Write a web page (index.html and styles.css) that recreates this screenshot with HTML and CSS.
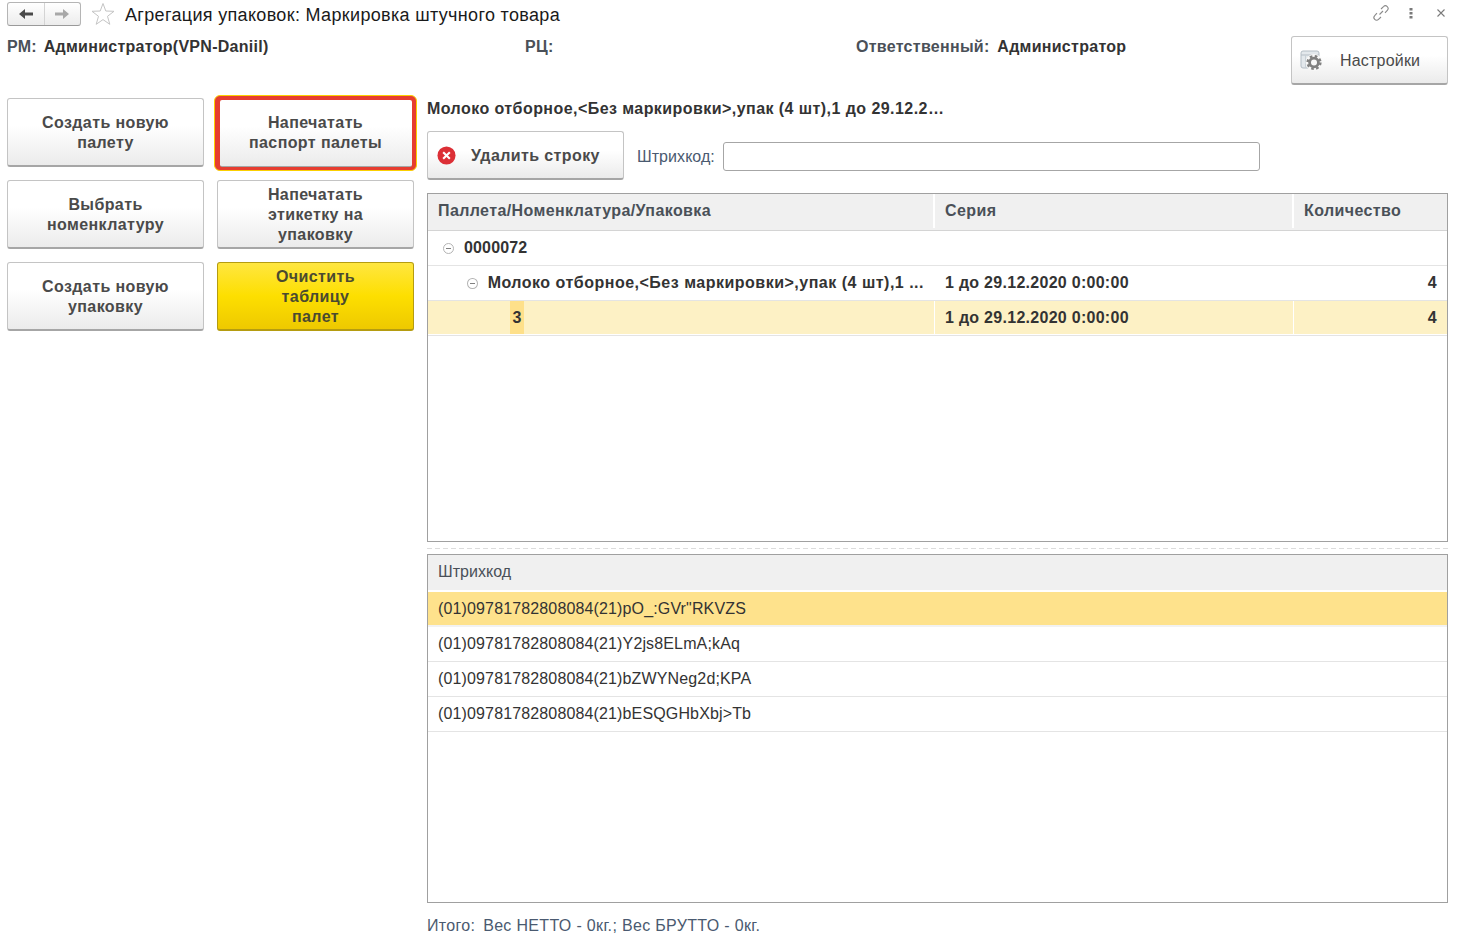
FILE: index.html
```html
<!DOCTYPE html>
<html lang="en">
<head>
  <meta charset="UTF-8">
  <title>Агрегация упаковок</title>
  <link rel="stylesheet" href="styles.css">
</head>
<body>
  <header class="topbar">
    <div class="nav-btns">
      <button class="nav-btn">
        <svg width="16" height="12" viewBox="0 0 16 12"><path d="M1 6 L7 1 V4.5 H15 V7.5 H7 V11 Z" fill="#4a4a4a"/></svg>
      </button>
      <button class="nav-btn">
        <svg width="16" height="12" viewBox="0 0 16 12"><path d="M15 6 L9 1 V4.5 H1 V7.5 H9 V11 Z" fill="#a8a8a8"/></svg>
      </button>
    </div>
    <svg class="star" width="24" height="24" viewBox="0 0 24 24"><path d="M12 1.5 L14.8 9 L23 9.3 L16.5 14.3 L18.8 22.3 L12 17.6 L5.2 22.3 L7.5 14.3 L1 9.3 L9.2 9 Z" fill="none" stroke="#c4c4c4"/></svg>
    <h1 class="title">Агрегация упаковок: Маркировка штучного товара</h1>
    <div class="win-icons">
      <svg class="icon-link" width="18" height="18" viewBox="0 0 18 18" fill="none" stroke="#8a8a8a" stroke-width="1.1"><path d="M7.5 10.5 L11 7"/><path d="M9 5 L11.5 2.6 a2.6 2.6 0 0 1 3.8 3.7 L13 8.8"/><path d="M9 13 L6.5 15.4 a2.6 2.6 0 0 1 -3.8 -3.7 L5 9.2"/></svg>
      <svg class="icon-dots" width="4" height="11" viewBox="0 0 4 11" fill="#7a7a7a"><rect x="0.5" y="0" width="3" height="2.5"/><rect x="0.5" y="4" width="3" height="2.5"/><rect x="0.5" y="8" width="3" height="2.5"/></svg>
      <svg class="icon-close" width="10" height="10" viewBox="0 0 10 10" stroke="#7a7a7a" stroke-width="1.1"><path d="M1.5 1.5 L8.5 8.5 M8.5 1.5 L1.5 8.5"/></svg>
    </div>
  </header>

  <section class="info-row">
    <div class="info info-rm"><span class="info-label">РМ:</span> <b>Администратор(VPN-Daniil)</b></div>
    <div class="info info-rc"><span class="info-label">РЦ:</span></div>
    <div class="info info-owner"><span class="info-label">Ответственный:</span> <b>Администратор</b></div>
    <button class="btn settings-btn">
      <svg width="24" height="22" viewBox="0 0 24 22">
        <rect x="1" y="1" width="18" height="17" rx="2" fill="#e3e8ec" stroke="#b4bdc5"/>
        <path d="M1 5 H19" stroke="#b4bdc5"/>
        <path d="M5.5 5 V18" stroke="#c8d0d6"/>
        <circle cx="14" cy="12.5" r="8.4" fill="#f8f8f8"/>
        <circle cx="14" cy="12.5" r="4.4" fill="none" stroke="#808080" stroke-width="2.8"/>
        <circle cx="14" cy="12.5" r="6.4" fill="none" stroke="#808080" stroke-width="2.4" stroke-dasharray="2.6 2.43"/>
      </svg>
      <span>Настройки</span>
    </button>
  </section>

  <main class="content">
    <aside class="actions">
      <button class="btn action">Создать новую<br>палету</button>
      <div class="focus-frame"><button class="btn action">Напечатать<br>паспорт палеты</button></div>
      <button class="btn action">Выбрать<br>номенклатуру</button>
      <button class="btn action">Напечатать<br>этикетку на<br>упаковку</button>
      <button class="btn action">Создать новую<br>упаковку</button>
      <button class="btn action action-yellow">Очистить<br>таблицу<br>палет</button>
    </aside>

    <div class="right">
      <div class="item-title">Молоко отборное,&lt;Без маркировки&gt;,упак (4 шт),1 до 29.12.2…</div>
      <div class="toolbar">
        <button class="btn delete-btn">
          <svg width="19" height="19" viewBox="0 0 20 20"><circle cx="10" cy="10" r="9.5" fill="#dc2f36"/><path d="M6.5 6.5 L13.5 13.5 M13.5 6.5 L6.5 13.5" stroke="#fff" stroke-width="2.2"/></svg>
          <span>Удалить строку</span>
        </button>
        <label class="barcode-label" for="barcode">Штрихкод:</label>
        <input class="barcode-input" id="barcode" type="text">
      </div>

      <div class="grid grid-tree">
        <div class="row head">
          <div class="cell c1">Паллета/Номенклатура/Упаковка</div>
          <div class="cell c2">Серия</div>
          <div class="cell c3">Количество</div>
        </div>
        <div class="row">
          <div class="cell c1 lvl1"><i class="minus"></i>0000072</div>
          <div class="cell c2"></div>
          <div class="cell c3"></div>
        </div>
        <div class="row">
          <div class="cell c1 lvl2"><i class="minus"></i><span class="clip">Молоко отборное,&lt;Без маркировки&gt;,упак (4 шт),1 ...</span></div>
          <div class="cell c2">1 до 29.12.2020 0:00:00</div>
          <div class="cell c3 num">4</div>
        </div>
        <div class="row current">
          <div class="cell c1 lvl3"><span class="active-val">3</span></div>
          <div class="cell c2">1 до 29.12.2020 0:00:00</div>
          <div class="cell c3 num">4</div>
        </div>
      </div>

      <div class="splitter"></div>

      <div class="grid grid-codes">
        <div class="row head"><div class="cell">Штрихкод</div></div>
        <div class="row selected"><div class="cell">(01)09781782808084(21)pO_:GVr"RKVZS</div></div>
        <div class="row"><div class="cell">(01)09781782808084(21)Y2js8ELmA;kAq</div></div>
        <div class="row"><div class="cell">(01)09781782808084(21)bZWYNeg2d;KPA</div></div>
        <div class="row"><div class="cell">(01)09781782808084(21)bESQGHbXbj&gt;Tb</div></div>
      </div>

      <div class="totals"><span class="totals-label">Итого:</span> Вес НЕТТО - 0кг.; Вес БРУТТО - 0кг.</div>
    </div>
  </main>
</body>
</html>
```

FILE: styles.css
```css
* {
  box-sizing: border-box;
}

html, body {
  height: 100%;
}

body {
  margin: 0;
  background-color: #fff;
  font-family: "Liberation Sans", Arial, sans-serif;
  font-size: 16px;
  color: #333;
  overflow: hidden;
}

/* top bar */
.topbar {
  display: flex;
  align-items: center;
  height: 30px;
  padding: 0 16px 2px 7px;
}

.nav-btns {
  display: flex;
  width: 74px;
  height: 24px;
  border: 1px solid #b5b5b5;
  border-bottom-color: #9a9a9a;
  border-radius: 3px;
  background: linear-gradient(#fff, #ececec);
}

.nav-btn {
  flex: 1;
  display: flex;
  align-items: center;
  justify-content: center;
  padding: 0;
  border: none;
  background: none;
}

.nav-btn + .nav-btn {
  border-left: 1px solid #d4d4d4;
}

.star {
  margin-left: 10px;
}

.title {
  margin: 2px 0 0 10px;
  font-size: 18px;
  font-weight: normal;
  letter-spacing: 0.33px;
  color: #1a1a1a;
}

.win-icons {
  display: flex;
  align-items: center;
  margin-left: auto;
  margin-bottom: 2px;
}

.icon-dots {
  margin-left: 19px;
}

.icon-close {
  margin-left: 23px;
}

/* info row */
.info-row {
  display: flex;
  height: 65px;
  padding: 6px 14px 0 7px;
}

.info {
  margin-top: 2px;
  line-height: 18px;
  letter-spacing: 0.28px;
  color: #333;
}

.info b {
  margin-left: 3px;
}

.info-label {
  font-weight: bold;
  color: #4a5058;
}

.info-rm {
  width: 518px;
}

.info-rm b {
  margin-left: 2px;
}

.info-rc {
  width: 331px;
}

.info-owner {
  flex: 1;
}

/* buttons */
.btn {
  border: 1px solid #c4c4c4;
  border-bottom: 2px solid #a6a6a6;
  border-radius: 3px;
  background: linear-gradient(#fff 40%, #ebebeb);
  font-family: inherit;
  font-size: 16px;
  font-weight: bold;
  line-height: 20px;
  letter-spacing: 0.4px;
  color: #4a4a4a;
}

.settings-btn {
  display: flex;
  align-items: center;
  width: 157px;
  height: 49px;
  padding: 2px 0 0 8px;
  font-weight: normal;
  letter-spacing: 0.2px;
}

.settings-btn span {
  margin-left: 16px;
}

.content {
  display: flex;
  padding: 0 14px 0 7px;
}

.actions {
  display: grid;
  grid-template-columns: 197px 197px;
  grid-auto-rows: 69px;
  gap: 13px;
  width: 420px;
  margin-top: 3px;
  align-content: start;
}

.action {
  width: 197px;
  height: 69px;
  padding: 2px 0 0;
}

.focus-frame {
  display: flex;
  width: 203px;
  height: 76px;
  margin: -3px 0 0 -3px;
  padding: 4px 4px 3px 5px;
  border: 1px solid #fbd000;
  border-radius: 6px;
  background: #e63d30;
}

.focus-frame .action {
  width: 100%;
  height: 100%;
  padding: 0 1px 0 0;
  border: none;
  border-bottom: 1px solid #a6a6a6;
  border-radius: 2px;
}

.action-yellow {
  background: linear-gradient(#ffe640, #fddf00 50%, #eec900);
  border-color: #b59c10;
  color: #4a4a30;
}

/* right column */
.right {
  width: 1021px;
  display: flex;
  flex-direction: column;
}

.item-title {
  height: 36px;
  padding-top: 5px;
  font-weight: bold;
  line-height: 18px;
  letter-spacing: 0.44px;
}

.toolbar {
  display: flex;
  align-items: center;
  height: 49px;
}

.delete-btn {
  display: flex;
  align-items: center;
  width: 197px;
  height: 49px;
  padding: 2px 0 0 9px;
}

.delete-btn svg {
  margin-top: -2px;
}

.delete-btn span {
  margin-left: 15px;
}

.barcode-label {
  margin: 2px 0 0 13px;
  letter-spacing: 0.06px;
  color: #4a5a70;
}

.barcode-input {
  width: 537px;
  height: 29px;
  margin: 2px 0 0 8px;
  border: 1px solid #a6a6a6;
  border-radius: 3px;
}

/* tables */
.grid {
  height: 349px;
  border: 1px solid #a0a0a0;
}

.grid-tree {
  margin-top: 13px;
  font-weight: bold;
}

.row {
  display: flex;
  height: 35px;
  border-bottom: 1px solid #e4e4e4;
}

.row.head {
  height: 37px;
  padding-bottom: 2px;
  background-color: #f0f0f0;
  border-bottom: 1px solid #d4d4d4;
  letter-spacing: 0.4px;
  color: #4a5058;
}

.grid-codes .row.head {
  height: 37px;
  border-bottom: 2px solid #fff;
  font-weight: normal;
  letter-spacing: 0.03px;
}

.cell {
  display: flex;
  align-items: center;
  padding: 0 10px;
  white-space: nowrap;
  letter-spacing: 0.28px;
}

.row.head .cell {
  letter-spacing: inherit;
}

.c1 {
  width: 507px;
  border-right: 1px solid #fff;
}

.c2 {
  width: 359px;
  border-right: 1px solid #fff;
}

.c3 {
  flex: 1;
}

.row.head .c1, .row.head .c2 {
  border-right: 2px solid #fff;
}

.num {
  justify-content: flex-end;
}

.lvl1 {
  padding-left: 15px;
  letter-spacing: 0.15px;
}

.lvl2 {
  padding-left: 39px;
}

.lvl3 {
  padding-left: 82px;
  align-items: stretch;
}

.clip {
  letter-spacing: 0.5px;
}

.minus {
  position: relative;
  width: 11px;
  height: 11px;
  margin-right: 10px;
  border: 1px solid #b4b4b4;
  border-radius: 50%;
}

.minus::after {
  content: "";
  position: absolute;
  left: 2px;
  right: 2px;
  top: 4px;
  height: 1px;
  background-color: #808080;
}

.row.current {
  background-color: #fdf1c5;
  box-shadow: inset 0 -1px #fff;
}

.active-val {
  display: flex;
  align-items: center;
  justify-content: center;
  width: 14px;
  margin-bottom: 1px;
  background-color: #fee08a;
}

.splitter {
  height: 12px;
  background: repeating-linear-gradient(90deg, #dcdcdc 0 5px, #fff 5px 8px) 0 6px / 100% 1px no-repeat;
}

.grid-codes .cell {
  letter-spacing: 0.14px;
}

.row.selected {
  background-color: #fee28c;
  border-bottom: 2px solid #f2f2f2;
}

.totals {
  margin-top: 14px;
  letter-spacing: 0.33px;
  color: #4a5a70;
  line-height: 18px;
}

.totals-label {
  margin-right: 3px;
}
```
